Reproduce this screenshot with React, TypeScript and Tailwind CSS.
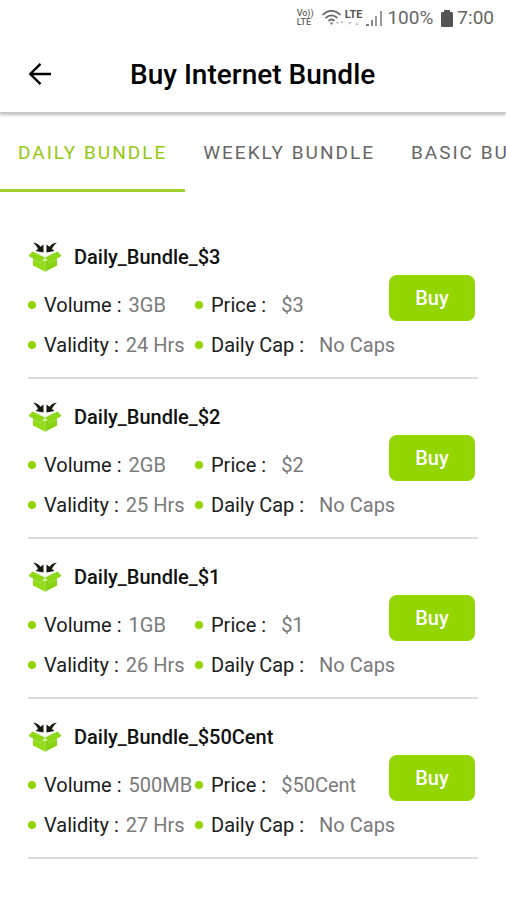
import React, { useState } from "react";

type Bundle = {
  name: string;
  volume: string;
  price: string;
  validity: string;
  cap: string;
};

const tabs = ["DAILY BUNDLE", "WEEKLY BUNDLE", "BASIC BUNDLE"];

const bundles: Bundle[] = [
  { name: "Daily_Bundle_$3", volume: "3GB", price: "$3", validity: "24 Hrs", cap: "No Caps" },
  { name: "Daily_Bundle_$2", volume: "2GB", price: "$2", validity: "25 Hrs", cap: "No Caps" },
  { name: "Daily_Bundle_$1", volume: "1GB", price: "$1", validity: "26 Hrs", cap: "No Caps" },
  { name: "Daily_Bundle_$50Cent", volume: "500MB", price: "$50Cent", validity: "27 Hrs", cap: "No Caps" },
];

function WifiIcon() {
  return (
    <svg width="23" height="18" viewBox="0 0 23 18" fill="none" stroke="#666" strokeWidth="1.7" aria-hidden="true">
      <path d="M0.500 6C6 0.500 13 0.500 18.500 6" />
      <path d="M3.500 9C7.500 5.500 11.500 5.500 15.500 9" />
      <path d="M6.500 12C8.500 10 10.500 10 12.500 12" />
      <path d="M7.500 13.500L9.500 16L11.500 13.500Z" fill="#777" stroke="none" />
      <path d="M14 13L15.500 15.500L17 13ZM18.500 14L20 11.500L21.500 14Z" fill="#bbb" stroke="none" />
    </svg>
  );
}

function SignalIcon() {
  return (
    <svg width="17" height="18" viewBox="0 0 17 18" aria-hidden="true">
      <path d="M0 15h3v2H0z" fill="#777" />
      <path d="M5 11h2v6H5z" fill="#888" />
      <path d="M9 7h2v10H9z" fill="#999" />
      <path d="M14 2h2v15h-2z" fill="#999" />
    </svg>
  );
}

function BatteryIcon() {
  return (
    <svg width="12" height="17" viewBox="0 0 12 17" aria-hidden="true">
      <path d="M3 0h6v2h2a1 1 0 0 1 1 1v13a1 1 0 0 1-1 1H1a1 1 0 0 1-1-1V3a1 1 0 0 1 1-1h2z" fill="#555" />
    </svg>
  );
}

function StatusBar() {
  return (
    <div className="flex h-9 items-center justify-end pr-3 text-[19px] leading-6 text-[#666]">
      <div className="mr-2 flex flex-col text-[9px] leading-[9px] font-medium">
        <span>Vo))</span>
        <span>LTE</span>
      </div>
      <WifiIcon />
      <div className="mr-1 flex h-[18px] flex-col items-center text-[11px] leading-3 font-bold text-[#555]">
        <span>LTE</span>
        <svg width="12" height="5" viewBox="0 0 12 5" fill="#ccc" aria-hidden="true">
          <path d="M0 1L2 4L4 1ZM7 4L9 1L11 4Z" />
        </svg>
      </div>
      <SignalIcon />
      <span className="mr-2 ml-1">100%</span>
      <BatteryIcon />
      <span className="ml-1">7:00</span>
    </div>
  );
}

function BoxIcon() {
  return (
    <svg width="34" height="30" viewBox="0 0 34 30" aria-hidden="true">
      <path d="M5 16L17 19L29 16V23.500L17 29.500L5 23.500Z" fill="#93dc1c" />
      <path d="M17 19L29 16V23.500L17 29.500Z" fill="#88d216" />
      <path d="M4.500 9.500L17 15.500L12.500 20.500L0.500 14L2 12Z" fill="#8cd815" />
      <path d="M29.500 9.500L17 15.500L21.500 20.500L33.500 14L32 12Z" fill="#8cd815" />
      <path d="M17 16V29M5 17L12.500 20.800L17 16L21.500 20.800L29 17" stroke="#b9ea6c" strokeWidth="0.700" fill="none" />
      <path d="M5 0.800C8 0.800 10.500 2 12.500 4.800L15.500 2.500V10.500L7.500 9L10 7C8.800 4.300 7.300 2.300 5 0.800Z" fill="#151a10" />
      <path d="M29 0.800C26 0.800 23.500 2 21.500 4.800L18.500 2.500V10.500L26.500 9L24 7C25.200 4.300 26.700 2.300 29 0.800Z" fill="#151a10" />
    </svg>
  );
}

function Detail({ label, value, valueClass }: { label: string; value: string; valueClass: string }) {
  return (
    <div className="flex items-center whitespace-nowrap">
      <span className="mr-2 h-2 w-2 shrink-0 rounded-full bg-[#93d500]" />
      <span className="text-[#1c1c1c]">{label} :</span>
      <span className={`text-[#7a7a7a] ${valueClass}`}>{value}</span>
    </div>
  );
}

function BundleItem({ bundle }: { bundle: Bundle }) {
  return (
    <li className="mx-7 flex h-40 flex-col justify-end border-b-2 border-[#dcdcdc] pb-5 text-[20px] leading-6">
      <div className="flex items-end justify-between">
        <div className="flex flex-col gap-5 pb-1">
          <div className="flex h-8 items-center">
            <BoxIcon />
            <h2 className="ml-3 font-medium text-[#111]">{bundle.name}</h2>
          </div>
          <div className="grid grid-cols-[167px_1fr]">
            <Detail label="Volume" value={bundle.volume} valueClass="ml-[7px]" />
            <Detail label="Price" value={bundle.price} valueClass="ml-[15px]" />
          </div>
        </div>
        <button
          type="button"
          className="mr-[3px] h-[46px] w-[86px] shrink-0 cursor-pointer rounded-lg bg-[#93d500] font-medium text-white"
        >
          Buy
        </button>
      </div>
      <div className="mt-3 grid grid-cols-[167px_1fr]">
        <Detail label="Validity" value={bundle.validity} valueClass="ml-[7px]" />
        <Detail label="Daily Cap" value={bundle.cap} valueClass="ml-[15px]" />
      </div>
    </li>
  );
}

export default function App() {
  const [active, setActive] = useState(0);
  return (
    <div className="min-h-screen overflow-hidden bg-white font-['Roboto',sans-serif]">
      <StatusBar />
      <header className="flex h-[77px] items-center border-b border-[#c8c8c8] pl-7 shadow-[0_2px_3px_rgba(0,0,0,0.25)]">
        <button type="button" aria-label="Back" className="cursor-pointer">
          <svg width="24" height="24" viewBox="0 0 24 24" fill="none" stroke="#000" strokeWidth="2.400" aria-hidden="true">
            <path d="M23 12H3M12.500 1.800L2.300 12L12.500 22.200" />
          </svg>
        </button>
        <h1 className="pt-0.5 pl-[78px] text-[28px] leading-8 font-medium text-black">Buy Internet Bundle</h1>
      </header>
      <nav className="flex h-[79px] overflow-hidden">
        {tabs.map((tab, i) => (
          <button
            key={tab}
            type="button"
            onClick={() => setActive(i)}
            className={`shrink-0 cursor-pointer border-b-[3px] px-[18px] pt-1 text-[19px] leading-6 tracking-[2px] whitespace-nowrap ${
              i === active ? "border-[#a2cf2f] text-[#93c90e]" : "border-transparent text-[#666]"
            }`}
          >
            {tab}
          </button>
        ))}
      </nav>
      <ul className="mt-[27px]">
        {bundles.map((bundle) => (
          <BundleItem key={bundle.name} bundle={bundle} />
        ))}
      </ul>
    </div>
  );
}
